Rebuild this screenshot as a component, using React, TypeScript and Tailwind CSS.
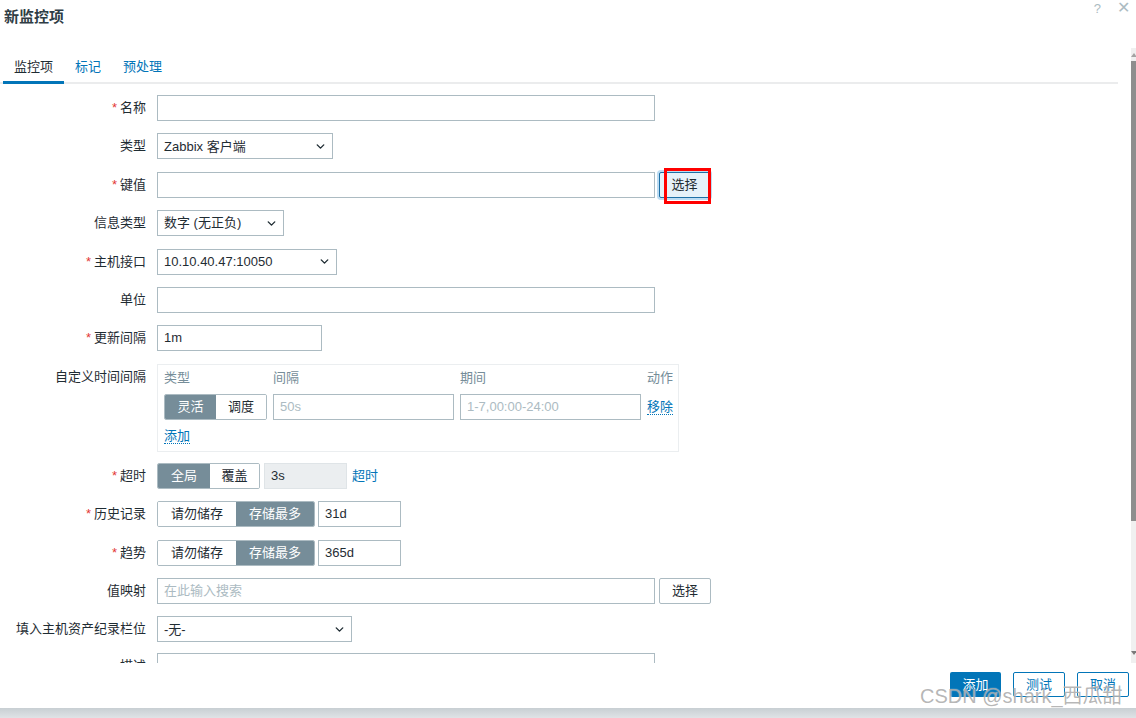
import React from 'react';
import { ChevronDown } from 'lucide-react';

const Req = () => <span className="text-[#e33734] mr-[3px]">*</span>;

const Row: React.FC<{ label: string; req?: boolean; children: React.ReactNode }> = ({ label, req, children }) => (
  <div className="flex items-start">
    <div className="w-[146px] shrink-0 text-right leading-[26px] whitespace-nowrap">
      {req && <Req />}
      {label}
    </div>
    <div className="ml-[11px] flex items-start">{children}</div>
  </div>
);

const Input: React.FC<{ w: string; value?: string; placeholder?: string; disabled?: boolean }> = ({ w, value, placeholder, disabled }) => (
  <div
    className={`${w} h-[26px] border px-[6px] leading-[24px] whitespace-nowrap ${
      disabled ? 'bg-[#ebeef0] border-[#dfe4e7]' : 'bg-white border-[#acbbc2]'
    } ${value ? 'text-[#1f2c33]' : 'text-[#acbbc2]'}`}
  >
    {value || placeholder}
  </div>
);

const Select: React.FC<{ w: string; value: string }> = ({ w, value }) => (
  <div className={`${w} h-[26px] border border-[#acbbc2] bg-white pl-[6px] pr-[5px] flex items-center justify-between`}>
    <span className="whitespace-nowrap">{value}</span>
    <ChevronDown size={13} strokeWidth={2.6} className="text-[#1f2c33]" />
  </div>
);

const Segment: React.FC<{ items: { label: string; w: string }[]; active: number }> = ({ items, active }) => (
  <div className="flex h-[26px] border border-[#acbbc2] rounded-[2px] overflow-hidden">
    {items.map((it, i) => (
      <div
        key={it.label}
        className={`${it.w} flex items-center justify-center whitespace-nowrap ${
          i === active ? 'bg-[#768d99] text-white' : 'bg-white text-[#1f2c33]'
        }`}
      >
        {it.label}
      </div>
    ))}
  </div>
);

const Link: React.FC<{ children: React.ReactNode; dotted?: boolean }> = ({ children, dotted }) => (
  <span className={`text-[#0275b8] whitespace-nowrap ${dotted ? 'border-b border-dotted border-[#0275b8]' : ''}`}>{children}</span>
);

export default function App() {
  return (
    <div className="w-[1136px] h-[718px] bg-white relative overflow-hidden flex flex-col font-['Liberation_Sans','Noto_Sans_CJK_SC',sans-serif] text-[13px] text-[#1f2c33]">
      {/* header */}
      <div className="h-[48px] shrink-0 flex items-start justify-between">
        <div className="pl-[4px] pt-[7px] text-[15px] font-bold leading-[20px] text-[#2f3d45]">新监控项</div>
        <div className="flex items-start gap-[16px] pr-[6px] text-[#acbbc2] text-[13px] leading-[18px]">
          <span>?</span>
          <span className="text-[16px] leading-[16px]">✕</span>
        </div>
      </div>

      {/* body */}
      <div className="h-[615px] shrink-0 flex overflow-hidden">
        <div className="w-[1118px] shrink-0 overflow-hidden">
          {/* tabs */}
          <div className="mt-[4px] h-[32px] flex border-b-2 border-[#ebeced]">
            <div className="ml-[3px] px-[11px] h-[32px] flex items-center border-b-[3px] border-[#0275b8] -mb-[2px] pt-[1px]">监控项</div>
            <div className="px-[11px] h-[30px] flex items-center text-[#0275b8]">标记</div>
            <div className="px-[11px] h-[30px] flex items-center text-[#0275b8]">预处理</div>
          </div>

          {/* form */}
          <div className="mt-[11px] flex flex-col gap-[12.4px]">
            <Row label="名称" req>
              <Input w="w-[498px]" />
            </Row>
            <Row label="类型">
              <Select w="w-[176px]" value="Zabbix 客户端" />
            </Row>
            <Row label="键值" req>
              <Input w="w-[498px]" />
              <div className="relative ml-[4px]">
                <div className="w-[51px] h-[26px] border border-[#1d6fa5] rounded-[2px] bg-[#e5f1f9] ring-2 ring-[#bcdcf3] flex items-center justify-center">
                  选择
                </div>
                <div className="absolute left-[5px] top-[-4px] w-[47px] h-[36px] border-[3px] border-[#ff0000]" />
              </div>
            </Row>
            <Row label="信息类型">
              <Select w="w-[127px]" value="数字 (无正负)" />
            </Row>
            <Row label="主机接口" req>
              <Select w="w-[180px]" value="10.10.40.47:10050" />
            </Row>
            <Row label="单位">
              <Input w="w-[498px]" />
            </Row>
            <Row label="更新间隔" req>
              <Input w="w-[165px]" value="1m" />
            </Row>
            <div className="flex items-start -mb-[1.4px]">
              <div className="w-[146px] shrink-0 text-right leading-[26px]">自定义时间间隔</div>
              <div className="ml-[11px] w-[522px] h-[88px] border border-[#ebeef0] pl-[6px] pr-[4px] pt-[5px]">
                <div className="grid grid-cols-[103px_181px_181px_auto] gap-x-[6px] text-[#768d99] leading-[16px] whitespace-nowrap">
                  <span>类型</span>
                  <span>间隔</span>
                  <span>期间</span>
                  <span>动作</span>
                </div>
                <div className="mt-[8px] grid grid-cols-[103px_181px_181px_auto] gap-x-[6px] items-center">
                  <Segment
                    items={[
                      { label: '灵活', w: 'w-[51px]' },
                      { label: '调度', w: 'w-[50px]' },
                    ]}
                    active={0}
                  />
                  <Input w="w-[181px]" placeholder="50s" />
                  <Input w="w-[181px]" placeholder="1-7,00:00-24:00" />
                  <div>
                    <Link dotted>移除</Link>
                  </div>
                </div>
                <div className="mt-[8px] leading-[16px]">
                  <Link dotted>添加</Link>
                </div>
              </div>
            </div>
            <Row label="超时" req>
              <Segment
                items={[
                  { label: '全局', w: 'w-[52px]' },
                  { label: '覆盖', w: 'w-[49px]' },
                ]}
                active={0}
              />
              <div className="ml-[4px]">
                <Input w="w-[83px]" value="3s" disabled />
              </div>
              <div className="ml-[5px] leading-[26px]">
                <Link>超时</Link>
              </div>
            </Row>
            <Row label="历史记录" req>
              <Segment
                items={[
                  { label: '请勿储存', w: 'w-[78px]' },
                  { label: '存储最多', w: 'w-[78px]' },
                ]}
                active={1}
              />
              <div className="ml-[3px]">
                <Input w="w-[83px]" value="31d" />
              </div>
            </Row>
            <Row label="趋势" req>
              <Segment
                items={[
                  { label: '请勿储存', w: 'w-[78px]' },
                  { label: '存储最多', w: 'w-[78px]' },
                ]}
                active={1}
              />
              <div className="ml-[3px]">
                <Input w="w-[83px]" value="365d" />
              </div>
            </Row>
            <Row label="值映射">
              <Input w="w-[498px]" placeholder="在此输入搜索" />
              <div className="ml-[4px] w-[52px] h-[26px] border border-[#acbbc2] rounded-[2px] bg-white flex items-center justify-center">
                选择
              </div>
            </Row>
            <Row label="填入主机资产纪录栏位">
              <Select w="w-[195px]" value="-无-" />
            </Row>
            <div className="-mt-[2px]">
              <Row label="描述">
                <div className="w-[498px] h-[60px] border border-[#acbbc2] bg-white" />
              </Row>
            </div>
          </div>
        </div>

        {/* scrollbar */}
        <div className="ml-[13px] w-[5px] bg-[#f0f0f0] flex flex-col items-center pt-[5px]">
          <div className="w-0 h-0 border-l-[3px] border-r-[3px] border-b-[4px] border-l-transparent border-r-transparent border-b-[#a3a3a3]" />
          <div className="mt-[4px] w-[5px] h-[460px] bg-[#8e8e8e]" />
          <div className="flex-1" />
          <div className="mb-[8px] w-0 h-0 border-l-[3px] border-r-[3px] border-t-[4px] border-l-transparent border-r-transparent border-t-[#7a7a7a]" />
        </div>
      </div>

      {/* footer */}
      <div className="h-[45px] shrink-0 flex justify-end items-start gap-[12px] pt-[9px] pr-[7px]">
        <div className="w-[51px] h-[25px] bg-[#0275b8] text-white rounded-[2px] flex items-center justify-center">添加</div>
        <div className="w-[52px] h-[25px] border border-[#0275b8] text-[#0275b8] rounded-[2px] flex items-center justify-center">测试</div>
        <div className="w-[52px] h-[25px] border border-[#0275b8] text-[#0275b8] rounded-[2px] flex items-center justify-center">取消</div>
      </div>
      <div className="flex-1 bg-gradient-to-b from-[#c8cfd3] to-[#dfe3e6]" />

      {/* watermark */}
      <div className="absolute left-[920px] top-[684px] text-[20px] leading-[24px] text-[rgba(120,120,120,0.55)] whitespace-nowrap [text-shadow:0_0_1px_rgba(255,255,255,0.9)]">
        CSDN @shark_西瓜甜
      </div>
    </div>
  );
}
